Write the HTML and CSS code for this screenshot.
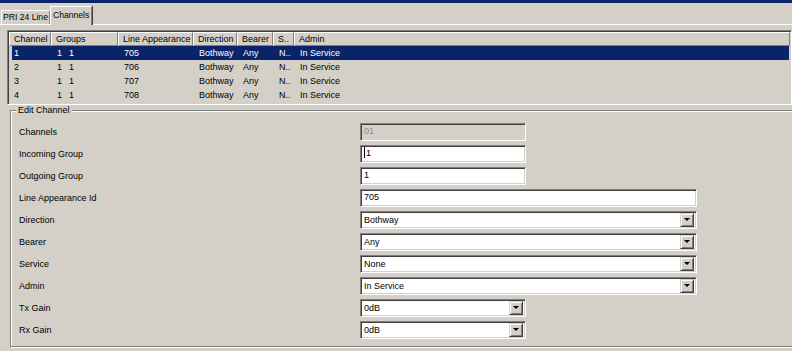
FILE: index.html
```html
<!doctype html>
<html lang="en">
<head>
    <meta charset="utf-8">
    <meta name="viewport" content="width=device-width, initial-scale=1.0">
    <title>PRI 24 Line - Channels</title>
    <link rel="stylesheet" href="styles.css">
</head>
<body>
    <div class="titlebar"></div>

    <div class="tabs">
        <div class="tab">PRI 24 Line</div>
        <div class="tab active">Channels</div>
    </div>

    <div class="panel">
        <!-- Channel list -->
        <div class="list">
            <div class="list-head">
                <div class="col">Channel</div>
                <div class="col">Groups</div>
                <div class="col">Line Appearance</div>
                <div class="col">Direction</div>
                <div class="col">Bearer</div>
                <div class="col">S..</div>
                <div class="col">Admin</div>
            </div>
            <div class="list-row selected">
                <div class="cell">1</div>
                <div class="cell"><span>1</span><span class="second">1</span></div>
                <div class="cell">705</div>
                <div class="cell">Bothway</div>
                <div class="cell">Any</div>
                <div class="cell">N..</div>
                <div class="cell">In Service</div>
            </div>
            <div class="list-row">
                <div class="cell">2</div>
                <div class="cell"><span>1</span><span class="second">1</span></div>
                <div class="cell">706</div>
                <div class="cell">Bothway</div>
                <div class="cell">Any</div>
                <div class="cell">N..</div>
                <div class="cell">In Service</div>
            </div>
            <div class="list-row">
                <div class="cell">3</div>
                <div class="cell"><span>1</span><span class="second">1</span></div>
                <div class="cell">707</div>
                <div class="cell">Bothway</div>
                <div class="cell">Any</div>
                <div class="cell">N..</div>
                <div class="cell">In Service</div>
            </div>
            <div class="list-row">
                <div class="cell">4</div>
                <div class="cell"><span>1</span><span class="second">1</span></div>
                <div class="cell">708</div>
                <div class="cell">Bothway</div>
                <div class="cell">Any</div>
                <div class="cell">N..</div>
                <div class="cell">In Service</div>
            </div>
        </div>

        <!-- Edit Channel group -->
        <div class="group">
            <span class="group-title">Edit Channel</span>
            <div class="form">
                <label>Channels</label>
                <div class="field small disabled">01</div>

                <label>Incoming Group</label>
                <div class="field small"><span class="caret"></span>1</div>

                <label>Outgoing Group</label>
                <div class="field small">1</div>

                <label>Line Appearance Id</label>
                <div class="field wide">705</div>

                <label>Direction</label>
                <div class="field wide select"><span class="value">Bothway</span><span class="drop"></span></div>

                <label>Bearer</label>
                <div class="field wide select"><span class="value">Any</span><span class="drop"></span></div>

                <label>Service</label>
                <div class="field wide select"><span class="value">None</span><span class="drop"></span></div>

                <label>Admin</label>
                <div class="field wide select"><span class="value">In Service</span><span class="drop"></span></div>

                <label>Tx Gain</label>
                <div class="field small select"><span class="value">0dB</span><span class="drop"></span></div>

                <label>Rx Gain</label>
                <div class="field small select"><span class="value">0dB</span><span class="drop"></span></div>
            </div>
        </div>
    </div>
</body>
</html>
```

FILE: styles.css
```css
/* General styling */
html, body {
    margin: 0;
    padding: 0;
    width: 792px;
    height: 351px;
    overflow: hidden;
}

body {
    background-color: #d4d0c8;
    font-family: 'Liberation Sans', Arial, sans-serif;
    font-size: 9px;
    color: #000;
}

.titlebar {
    height: 3px;
    background-color: #0a246a;
}

/* Tabs */
.tabs {
    display: flex;
    align-items: flex-end;
    height: 21px;
    padding-left: 1px;
    font-size: 8.6px;
}

.tab {
    height: 13px;
    line-height: 13px;
    padding: 0 1px;
    border-top: 1px solid #fff;
    border-left: 1px solid #fff;
    border-right: 1px solid #808080;
    white-space: nowrap;
}

.tab.active {
    position: relative;
    z-index: 1;
    height: 18px;
    line-height: 16px;
    margin-bottom: -1px;
    padding: 0 2px;
    background-color: #d4d0c8;
    box-shadow: 1px 0 #404040;
}

.panel {
    border-top: 1px solid #fff;
}

/* Channel list */
.list {
    margin: 5px 0 0 7px;
    height: 71px;
    border-top: 1px solid #808080;
    border-left: 1px solid #808080;
    border-bottom: 1px solid #fff;
    border-right: 1px solid #fff;
    box-shadow: inset 1px 1px #404040, inset -1px -1px #d4d0c8;
    padding: 1px;
}

.list-head {
    display: grid;
    grid-template-columns: 42px 67px 75px 44px 36px 21px 1fr;
    height: 14px;
}

.col {
    box-sizing: border-box;
    height: 14px;
    line-height: 12px;
    padding-left: 4px;
    border-top: 1px solid #fff;
    border-left: 1px solid #fff;
    border-right: 1px solid #808080;
    border-bottom: 1px solid #808080;
    white-space: nowrap;
    overflow: hidden;
}

.list-row {
    display: grid;
    grid-template-columns: 39px 67px 75px 44px 36px 21px 1fr;
    height: 14px;
    line-height: 14px;
    margin: 0 1px 0 3px;
}

.list-row.selected {
    background-color: #0a246a;
    color: #fff;
}

.cell {
    padding-left: 6px;
    white-space: nowrap;
    overflow: hidden;
}

.cell:first-child {
    padding-left: 2px;
}

.cell .second {
    margin-left: 7px;
}

/* Group box */
.group {
    position: relative;
    margin: 5px -4px 0 10px;
    padding: 12px 0 7px 8px;
    border: 1px solid #808080;
    box-shadow: inset 1px 1px #fff, 1px 1px #fff;
}

.group-title {
    position: absolute;
    top: -6px;
    left: 5px;
    padding: 0 2px;
    line-height: 11px;
    background-color: #d4d0c8;
}

.form {
    display: grid;
    grid-template-columns: 341px auto;
    row-gap: 4px;
    align-items: center;
}

.field {
    box-sizing: border-box;
    height: 18px;
    line-height: 14px;
    padding-left: 3px;
    border-top: 1px solid #808080;
    border-left: 1px solid #808080;
    border-bottom: 1px solid #fff;
    border-right: 1px solid #fff;
    box-shadow: inset 1px 1px #404040, inset -1px -1px #d4d0c8;
    background-color: #fff;
    white-space: nowrap;
}

.field.small {
    width: 166px;
}

.field.wide {
    width: 337px;
}

.field.disabled {
    background-color: #d4d0c8;
    color: #8c8c8c;
}

.caret {
    display: inline-block;
    width: 0;
    height: 11px;
    margin-right: 1px;
    vertical-align: -2px;
    border-left: 1px solid #000;
}

/* Dropdowns */
.select {
    display: flex;
    align-items: center;
    padding-right: 2px;
}

.select .value {
    flex: 1;
}

.drop {
    position: relative;
    box-sizing: border-box;
    width: 14px;
    height: 14px;
    background-color: #d4d0c8;
    border-top: 1px solid #d4d0c8;
    border-left: 1px solid #d4d0c8;
    border-bottom: 1px solid #404040;
    border-right: 1px solid #404040;
    box-shadow: inset 1px 1px #fff, inset -1px -1px #808080;
}

.drop::after {
    content: "";
    position: absolute;
    left: 3px;
    top: 4px;
    border-left: 3px solid transparent;
    border-right: 3px solid transparent;
    border-top: 3px solid #000;
}
```
